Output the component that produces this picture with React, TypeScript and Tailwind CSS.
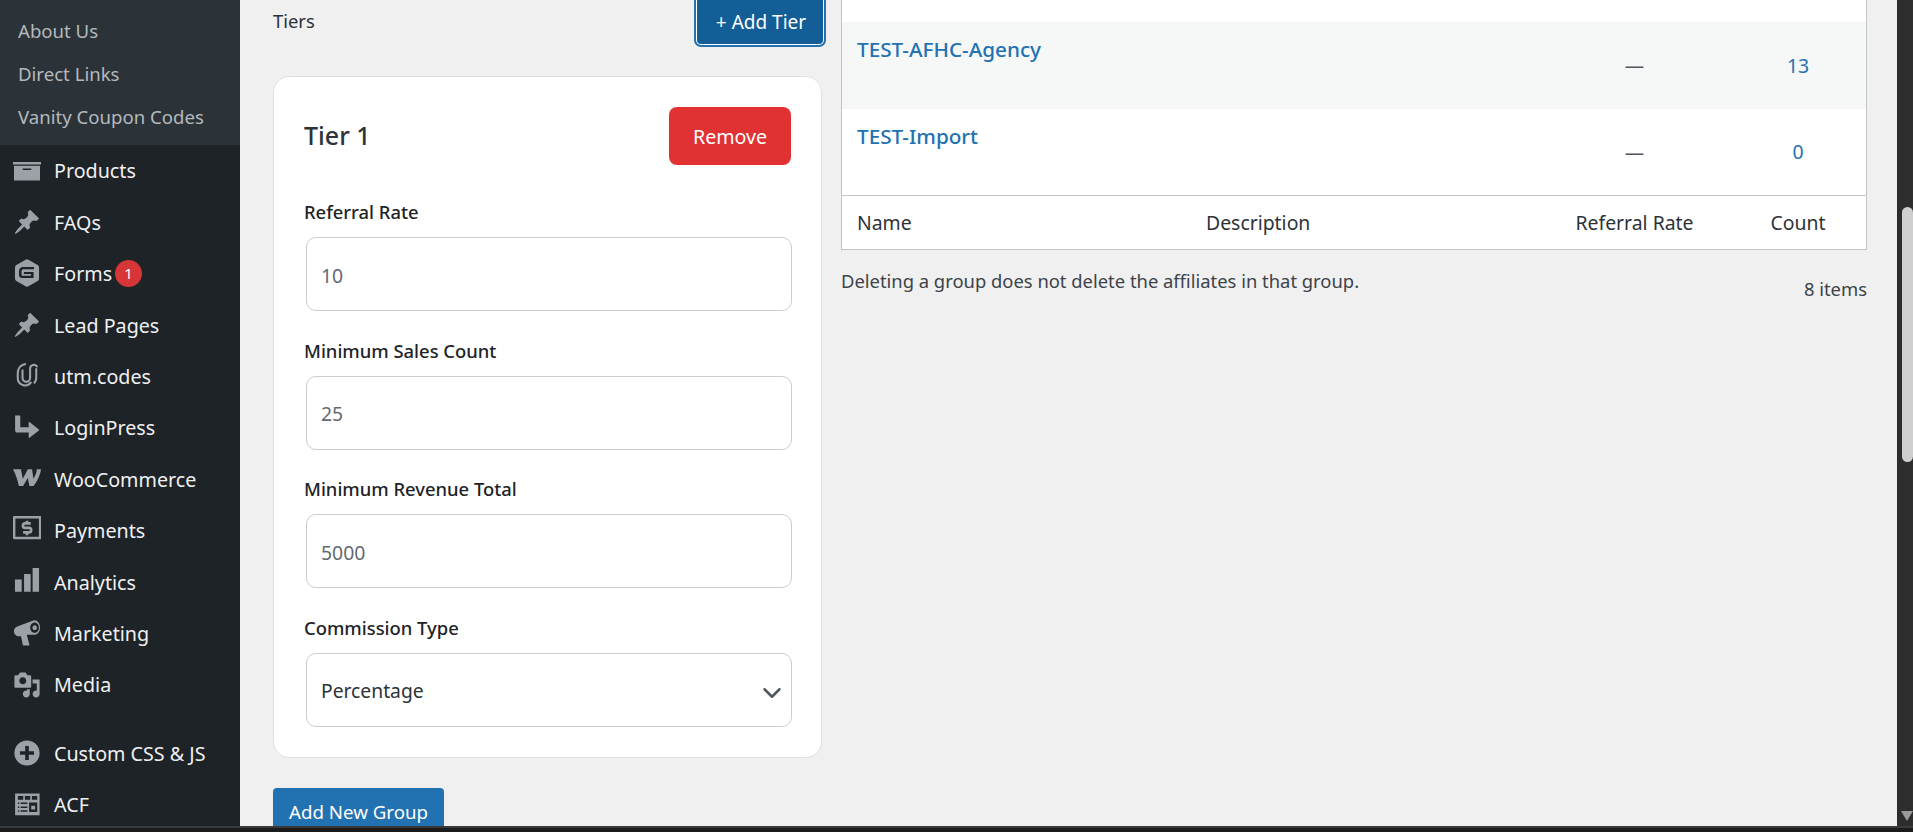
import { ChevronDown } from "lucide-react";
import type { ReactNode } from "react";

const F = "font-['Noto_Sans','Open_Sans',sans-serif]";

function Ico({ children }: { children: ReactNode }) {
  return (
    <svg viewBox="0 0 20 20" className="h-[28px] w-[28px] shrink-0 fill-[#9ca1a7]" fillRule="evenodd">
      {children}
    </svg>
  );
}

const pin = "M10.44 3.02l1.82-1.82 6.36 6.35-1.83 1.82c-1.05-.68-2.48-.57-3.41.36l-.75.75c-.92.93-1.04 2.35-.35 3.41l-1.83 1.82-2.41-2.41-2.8 2.79c-.42.42-3.38 2.71-3.8 2.29s1.86-3.39 2.28-3.81l2.79-2.79L4.1 9.36l1.83-1.82c1.05.69 2.48.57 3.4-.36l.75-.75c.93-.92 1.05-2.35.36-3.41z";

const icons: Record<string, ReactNode> = {
  archive: <path d="M20 3.600v1.700H0V3.600h20zM.7 6.200h18.600v10.500H.7V6.200zm12.300 3V8.300H7v.9h6z" />,
  pin: <path d={pin} />,
  gravity: <path d="M9 .5a2 2 0 0 1 2 0l6.600 3.800a2 2 0 0 1 1 1.700v8a2 2 0 0 1-1 1.700L11 19.500a2 2 0 0 1-2 0l-6.600-3.800a2 2 0 0 1-1-1.700V6a2 2 0 0 1 1-1.700L9 .5zM7.200 5.700C5.400 5.700 4.300 7 4.300 8.600v2.800c0 1.300.9 2.200 2.200 2.200h8.200V9.200H7.800v1.500h5.100v1.300H6.700c-.4 0-.6-.3-.6-.7V8.700c0-.7.5-1.300 1.300-1.300h7.600V5.700H7.200z" />,
  utm: (
    <g fill="none" stroke="#9ca1a7" strokeWidth="1.500" strokeLinecap="round">
      <path d="M8.600 1.500C5.500 2 3.400 4.700 3.400 8v3.500a5.200 5.200 0 0 0 9.300 3.200" />
      <path d="M6.800 6v5.500a2.700 2.700 0 0 0 5.400 0V4.600a2.700 2.700 0 0 1 4.900-1.400" />
      <path d="M16.600 5v6.500a5 5 0 0 1-1.300 3.300" />
    </g>
  ),
  login: <path d="M1.500 1h3.700v8.400h6V6c0-.3.400-.5.600-.3l6.700 5.300c.3.200.3.500 0 .7l-6.700 5.300c-.2.200-.6 0-.6-.3v-3.400H3.200c-1 0-1.700-.7-1.700-1.700V1z" />,
  woo: <path d="M0 3h5.700L7 9.800 10.600 3h3l1 6.800C16 7.500 17 5 17 3h3c-.4 4-2.800 8.800-5.300 12h-3l-1.100-5.800L7.200 15h-3C3.300 10.800 1.700 6 0 3z" />,
  pay: (
    <>
      <path d="M.8 0h18.600c.5 0 .8.400.8.800v15c0 .5-.3.800-.8.800H.8c-.5 0-.8-.3-.8-.8V.8C0 .4.300 0 .8 0zm.9 1.700v13.200h16.800V1.700H1.700z" />
      <path d="M12.700 5.300H8.700a1.600 1.600 0 0 0 0 3.200h2.700a1.600 1.600 0 0 1 0 3.200H7.200M10 3.400v2M10 11.700v2" fill="none" stroke="#9ca1a7" strokeWidth="1.900" />
    </>
  ),
  chart: <path d="M18.600 17V0H14v17h4.600zm-6 0V4.300H7.900V17h4.700zm-6.400 0V8.300H1.400V17h4.800z" />,
  mega: <path d="M14.500 1c2.700-.7 4.800 2 4.800 5s-1.800 5.200-4 5.200H9.800l1.900 7c.1.500-.2.800-.6.800H7.700c-.3 0-.6-.2-.7-.6L5.700 12.300H4.300C2.300 12.300.7 10.800.7 8.700c0-1.500.9-2.800 2.300-3.300L14.500 1zm.9 1.500c-1.700 0-3.100 1.700-3.100 3.700s1.400 3.700 3.100 3.700 3.100-1.700 3.100-3.700-1.400-3.700-3.100-3.700zm.100 2c.9 0 1.600.8 1.600 1.700s-.7 1.700-1.600 1.700-1.600-.8-1.600-1.700.7-1.700 1.600-1.700z" />,
  media: <path d="M13 11V4c0-.55-.45-1-1-1h-1.670L9 1H5L3.670 3H2c-.55 0-1 .45-1 1v7c0 .55.45 1 1 1h10c.55 0 1-.45 1-1zM7 4.500c1.380 0 2.500 1.120 2.500 2.500S8.380 9.500 7 9.500 4.500 8.380 4.500 7 5.620 4.500 7 4.500zM14 6h5v10.500c0 1.380-1.120 2.500-2.500 2.500S14 17.880 14 16.500s1.120-2.500 2.500-2.500c.17 0 .34.020.5.050V9h-3V6zm-4 8.050V13h2v3.500c0 1.380-1.120 2.500-2.500 2.500S7 17.880 7 16.500 8.120 14 9.500 14c.17 0 .34.020.5.050z" />,
  plus: <path d="M10 1a9 9 0 1 0 0 18 9 9 0 0 0 0-18zm5 10.300h-3.700V15H8.700v-3.700H5V8.700h3.700V5h2.600v3.700H15v2.600z" />,
  acf: (
    <path d="M1.500 2.500h17.500v15.500H1.500V2.500zM3.500 4.200v2.800h3.800V4.200H3.500zm5 0v2.800h3.800V4.200H8.500zm5 0v2.800h3.800V4.200h-3.800zM3.500 9v1h1V9h-1zm2 0v1h4.800V9H5.500zm6 0v6.800h5.800V9h-5.800zm1.500 2.200h2.800V14H13v-2.800zM3.500 11.800v1h1v-1h-1zm2 0v1h4.800v-1H5.500zM3.500 14.500v1h1v-1h-1zm2 0v1h4.800v-1H5.500z" />
  ),
};

function Item({ icon, label, badge, className = "" }: { icon: string; label: string; badge?: string; className?: string }) {
  return (
    <div className={`flex h-[51.4px] items-center pl-[13px] ${className}`}>
      <Ico>{icons[icon]}</Ico>
      <span className="ml-[13px] pt-[1px] text-[19.7px] text-[#f0f0f1]">{label}</span>
      {badge && (
        <span className="ml-[3px] flex h-[27px] w-[27px] items-center justify-center rounded-full bg-[#d63638] text-[15px] text-white">
          {badge}
        </span>
      )}
    </div>
  );
}

function FieldLabel({ children }: { children: ReactNode }) {
  return <label className="block h-[24px] text-[18.4px] font-medium leading-[24px] text-[#1d2327]">{children}</label>;
}

function Field({ label, value }: { label: string; value: string }) {
  return (
    <div className="mb-[27.67px]">
      <FieldLabel>{label}</FieldLabel>
      <input
        readOnly
        value={value}
        className="mt-[13px] ml-[2px] block h-[74px] w-[486px] rounded-[10px] border border-[#cccccc] bg-white px-[14px] pt-[2px] text-[19.4px] text-[#646970] outline-none"
      />
    </div>
  );
}

const cols = "grid-cols-[349px_348px_191px_136px]";

function Row({ name, count, striped }: { name: string; count: string; striped?: boolean }) {
  return (
    <div className={`grid h-[86.5px] ${cols} ${striped ? "bg-[#f6f7f7]" : "bg-white"}`}>
      <a className="px-[15px] pt-[13px] text-[20.7px] font-medium leading-[28px] text-[#2271b1]">{name}</a>
      <div />
      <div className="flex items-center justify-center pt-[1px] text-[19.4px] text-[#50575e]">—</div>
      <div className="flex items-center justify-center text-[19.4px] text-[#2271b1]">{count}</div>
    </div>
  );
}

export default function App() {
  return (
    <div className={`flex h-[832px] w-full flex-col overflow-hidden bg-[#1b1b1b] ${F}`}>
      <div className="flex h-[826px] shrink-0 overflow-hidden">
        <aside className="w-[240px] shrink-0 bg-[#1d2327]">
          <div className="h-[145px] bg-[#2c3338] pt-[10px] text-[18.6px] text-[#b4b9be]">
            <div className="flex h-[42px] items-center pl-[18px]">About Us</div>
            <div className="flex h-[43px] items-center pl-[18px]">Direct Links</div>
            <div className="flex h-[43px] items-center pl-[18px]">Vanity Coupon Codes</div>
          </div>
          <Item icon="archive" label="Products" />
          <Item icon="pin" label="FAQs" />
          <Item icon="gravity" label="Forms" badge="1" />
          <Item icon="pin" label="Lead Pages" />
          <Item icon="utm" label="utm.codes" />
          <Item icon="login" label="LoginPress" />
          <Item icon="woo" label="WooCommerce" />
          <Item icon="pay" label="Payments" />
          <Item icon="chart" label="Analytics" />
          <Item icon="mega" label="Marketing" />
          <Item icon="media" label="Media" />
          <Item icon="plus" label="Custom CSS & JS" className="mt-[17px]" />
          <Item icon="acf" label="ACF" />
        </aside>

        <main className="flex min-w-0 flex-1 gap-[19px] bg-[#f0f0f0] pl-[33px]">
          <section className="w-[549px] shrink-0">
            <div className="flex h-[76px] items-start justify-between">
              <span className="pt-[9px] text-[18.4px] leading-[24px] text-[#2c3338]">Tiers</span>
              <button className="-mt-[6px] -mr-px h-[50px] w-[126px] rounded-[4px] bg-[#135e96] pt-[6px] pl-[2px] text-[19px] text-white shadow-[0_0_0_1px_#fff,0_0_0_3px_#2271b1]">
                + Add Tier
              </button>
            </div>
            <div className="h-[682px] rounded-[16px] border border-[#e0e0e0] bg-white px-[30px] pt-[30px]">
              <div className="mb-[35px] flex h-[58px] items-center justify-between">
                <h3 className="text-[25px] font-medium text-[#2c3338]">Tier 1</h3>
                <button className="h-[58px] w-[122px] rounded-[8px] bg-[#e03232] pt-[2px] text-[19.6px] text-white">Remove</button>
              </div>
              <Field label="Referral Rate" value="10" />
              <Field label="Minimum Sales Count" value="25" />
              <Field label="Minimum Revenue Total" value="5000" />
              <div>
                <FieldLabel>Commission Type</FieldLabel>
                <div className="relative mt-[13px] ml-[2px] w-[486px]">
                  <select className="block h-[74px] w-full appearance-none rounded-[10px] border border-[#cccccc] bg-white px-[14px] pt-[2px] text-[19.3px] text-[#2c3338] outline-none">
                    <option>Percentage</option>
                  </select>
                  <ChevronDown className="pointer-events-none absolute right-[5px] top-[25px] h-[30px] w-[30px] text-[#50575e]" strokeWidth={2} />
                </div>
              </div>
            </div>
            <button className="mt-[30px] h-[48px] w-[171px] rounded-[4px] bg-[#2271b1] text-[18.7px] text-white">Add New Group</button>
          </section>

          <section className="w-[1026px] shrink-0">
            <div className="border-x border-b border-[#c3c4c7]">
              <div className="h-[22px] bg-white" />
              <Row name="TEST-AFHC-Agency" count="13" striped />
              <Row name="TEST-Import" count="0" />
              <div className={`grid h-[54px] ${cols} items-center border-t border-[#c3c4c7] bg-white text-[19.4px] text-[#2c3338]`}>
                <span className="px-[15px]">Name</span>
                <span className="px-[15px]">Description</span>
                <span className="text-center">Referral Rate</span>
                <span className="text-center">Count</span>
              </div>
            </div>
            <div className="flex items-start justify-between pt-[17px] text-[18.4px] text-[#3c434a]">
              <p>Deleting a group does not delete the affiliates in that group.</p>
              <span className="mt-[8px]">8 items</span>
            </div>
          </section>
        </main>

        <div className="flex w-[16px] shrink-0 flex-col bg-[#2d2d2d]">
          <div className="mt-[207px] ml-[5px] h-[255px] w-[11px] rounded-[8px] bg-[#cfcfcf]" />
          <div className="mt-auto mb-[5px] ml-[4px] h-0 w-0 border-x-[6px] border-t-[10px] border-x-transparent border-t-[#9a9a9a]" />
        </div>
      </div>
      <div className="h-[2px] w-full shrink-0 bg-[#3a3a3a]" />
    </div>
  );
}
